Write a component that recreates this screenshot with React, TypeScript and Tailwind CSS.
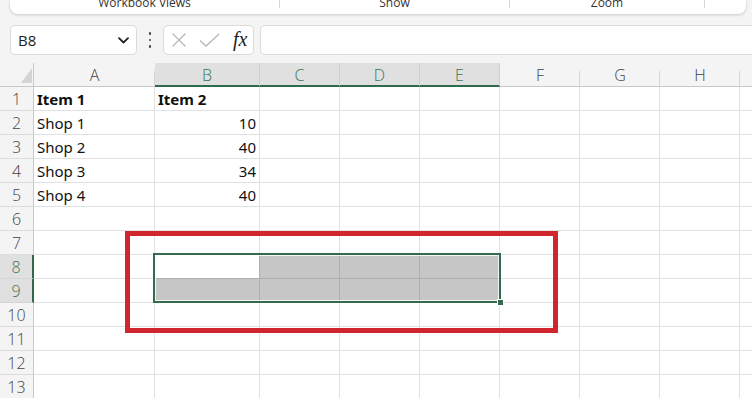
import React from "react";

const COLS = ["A", "B", "C", "D", "E", "F", "G", "H", "I"];
const SEL_COLS = new Set(["B", "C", "D", "E"]);

type CellData = { text?: string; bold?: boolean; right?: boolean };

const data: Record<string, CellData> = {
  A1: { text: "Item 1", bold: true },
  B1: { text: "Item 2", bold: true },
  A2: { text: "Shop 1" },
  B2: { text: "10", right: true },
  A3: { text: "Shop 2" },
  B3: { text: "40", right: true },
  A4: { text: "Shop 3" },
  B4: { text: "34", right: true },
  A5: { text: "Shop 4" },
  B5: { text: "40", right: true },
};

function isGray(col: string, row: number) {
  if (!SEL_COLS.has(col)) return false;
  if (row === 9) return true;
  if (row === 8 && col !== "B") return true;
  return false;
}

export default function App() {
  const rows = Array.from({ length: 13 }, (_, i) => i + 1);
  return (
    <div
      className="relative w-[752px] h-[398px] overflow-hidden bg-[#f4f4f4]"
      style={{ fontFamily: "'Open Sans', 'Noto Sans', sans-serif" }}
    >
      {/* Ribbon group labels */}
      <div className="ml-[10px] mr-[6px] h-[14px] bg-white rounded-b-[8px] shadow-[0_1px_3px_rgba(0,0,0,0.18)] flex overflow-hidden">
        <div className="w-[270px] flex justify-center border-r border-[#d6d6d6] h-[8px]">
          <span className="text-[12px] leading-none text-[#333] -mt-[3px]">Workbook Views</span>
        </div>
        <div className="w-[230px] flex justify-center border-r border-[#d6d6d6] h-[8px]">
          <span className="text-[12px] leading-none text-[#333] -mt-[3px]">Show</span>
        </div>
        <div className="w-[195px] flex justify-center border-r border-[#d6d6d6] h-[8px]">
          <span className="text-[12px] leading-none text-[#333] -mt-[3px]">Zoom</span>
        </div>
        <div className="flex-1" />
      </div>

      {/* Formula bar */}
      <div className="mt-[11px] h-[30px] flex items-stretch">
        <div className="ml-[10px] w-[127px] bg-white border border-[#dadada] rounded-[5px] flex items-center justify-between pl-[7px] pr-[7px]">
          <span className="text-[15px] text-[#222] leading-none">B8</span>
          <svg width="11" height="7" viewBox="0 0 11 7" fill="none">
            <path d="M1 1.2 L5.5 5.5 L10 1.2" stroke="#222" strokeWidth="1.8" strokeLinecap="round" strokeLinejoin="round" />
          </svg>
        </div>
        <div className="w-[26px] flex flex-col items-center justify-center gap-[4px]">
          <span className="w-[2.5px] h-[2.5px] rounded-full bg-[#444]" />
          <span className="w-[2.5px] h-[2.5px] rounded-full bg-[#444]" />
          <span className="w-[2.5px] h-[2.5px] rounded-full bg-[#444]" />
        </div>
        <div className="w-[91px] bg-white border border-[#dadada] rounded-[5px] flex items-center pl-[7px]">
          <svg width="16" height="16" viewBox="0 0 16 16" fill="none">
            <path d="M1.5 1.5 L14.5 14.5 M14.5 1.5 L1.5 14.5" stroke="#b8b8b8" strokeWidth="1.3" />
          </svg>
          <svg width="21" height="16" viewBox="0 0 21 16" fill="none" className="ml-[12px]">
            <path d="M1 8.5 L7 14 L20 2" stroke="#b8b8b8" strokeWidth="1.3" />
          </svg>
          <span
            className="ml-[13px] text-[20px] italic leading-none text-[#222] -mt-[3px]"
            style={{ fontFamily: "'Liberation Serif', 'DejaVu Serif', serif" }}
          >
            fx
          </span>
        </div>
        <div className="ml-[6px] flex-1 -mr-[10px] bg-white border border-[#dadada] rounded-[5px]" />
      </div>

      {/* Grid */}
      <div className="mt-[8px] grid grid-cols-[34px_121px_105px_repeat(7,80px)] w-max">
        {/* Corner */}
        <div className="h-[24px] bg-[#f4f4f4] border-r border-b border-[#c8c8c8] flex items-end justify-end pr-[1px] pb-[3px]">
          <svg width="11" height="15" viewBox="0 0 11 15">
            <polygon points="11,0 11,15 0,15" fill="#d4d4d4" />
          </svg>
        </div>
        {COLS.map((c) => {
          const sel = SEL_COLS.has(c);
          return (
            <div
              key={c}
              className={
                sel
                  ? "h-[24px] bg-[#e0e0e0] border-b-2 border-b-[#2f6b4a] border-r border-r-[#cfcfcf] flex items-center justify-center text-[16px] font-light text-[#3b7554]"
                  : "relative h-[24px] bg-[#f4f4f4] border-b border-[#c8c8c8] flex items-center justify-center text-[16px] font-light text-[#444] after:content-[''] after:absolute after:right-0 after:bottom-0 after:h-[15px] after:w-px after:bg-[#d6d6d6]"
              }
            >
              <span className="mt-[1px]">{c}</span>
            </div>
          );
        })}
        {rows.map((r) => {
          const selRow = r === 8 || r === 9;
          return (
            <React.Fragment key={r}>
              <div
                className={
                  selRow
                    ? "h-[24px] bg-[#e0e0e0] border-r-2 border-r-[#2f6b4a] border-b border-b-[#d4d4d4] flex items-center justify-center text-[16px] font-light text-[#3b7554]"
                    : "h-[24px] bg-[#f4f4f4] border-r border-r-[#c8c8c8] border-b border-b-[#dcdcdc] flex items-center justify-center text-[16px] font-light text-[#444]"
                }
              >
                <span className="mt-[1px]">{r}</span>
              </div>
              {COLS.map((c) => {
                const d = data[c + r];
                const gray = isGray(c, r);
                const active = c === "B" && r === 8;
                let cls = "h-[24px] border-r border-b flex items-center px-[3px] text-[15px] text-[#111] whitespace-nowrap ";
                if (gray) cls += "bg-[#c6c6c6] border-[#aeaeae] ";
                else if (active) cls += "bg-white border-[#b0b0b0] ";
                else cls += "bg-white border-[#e1e1e1] ";
                if (d?.right) cls += "justify-end ";
                if (d?.bold) cls += "font-bold ";
                return (
                  <div key={c} className={cls} style={{ fontFamily: "'Noto Sans', 'Open Sans', sans-serif" }}>
                    {d?.text ? <span className="mt-[2px]">{d.text}</span> : null}
                  </div>
                );
              })}
            </React.Fragment>
          );
        })}
      </div>

      {/* Selection border */}
      <div className="absolute left-[153px] top-[253px] w-[348px] h-[50px] border-2 border-[#356a4e]">
        <div className="w-full h-full border border-white/80" />
        <div className="absolute -right-[5px] -bottom-[5px] w-[7px] h-[7px] bg-[#356a4e] border border-white" />
      </div>

      {/* Red highlight box */}
      <div className="absolute left-[125px] top-[231px] w-[433px] h-[102px] border-[5px] border-[#d2262f]" />
    </div>
  );
}
